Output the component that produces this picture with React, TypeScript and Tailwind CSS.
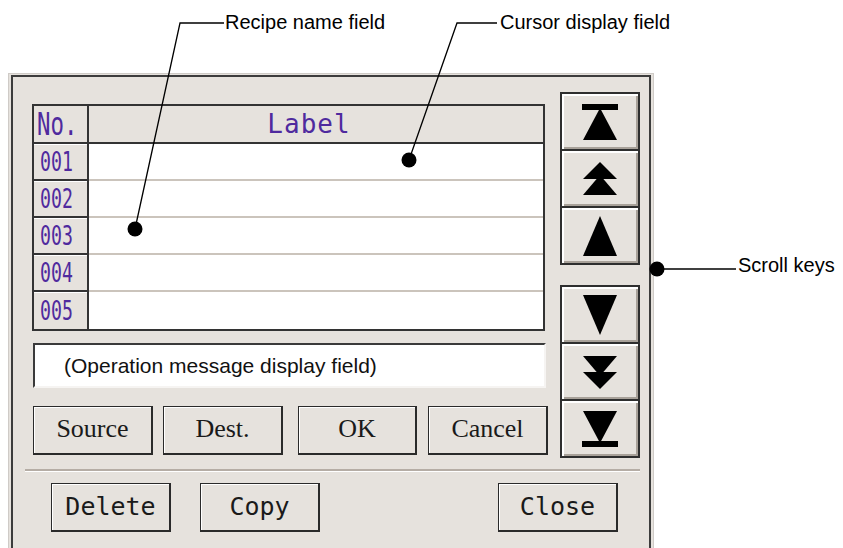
const PURPLE = "text-[#4f2a9e]";

function UpIcon({ kind }: { kind: "top" | "page" | "line" }) {
  return (
    <svg width="36" height="40" viewBox="0 0 36 40">
      {kind === "top" && (
        <>
          <rect x="0" y="2" width="36" height="6" fill="#000" />
          <polygon points="18,6 35,38 1,38" fill="#000" />
        </>
      )}
      {kind === "page" && (
        <>
          <polygon points="18,3 35,20 1,20" fill="#000" />
          <polygon points="18,16 35,36 1,36" fill="#000" />
        </>
      )}
      {kind === "line" && <polygon points="18,0 35,40 1,40" fill="#000" />}
    </svg>
  );
}

function ScrollKey({ kind, down }: { kind: "top" | "page" | "line"; down?: boolean }) {
  return (
    <div className="h-[59px] -mt-[2px] first:mt-0 border-2 border-[#2e2e2e] bg-[#e6e2dd] shadow-[inset_2px_2px_0_#ffffff,inset_-2px_-2px_0_#a8a199] flex items-center justify-center">
      <div className={down ? "rotate-180" : ""}>
        <UpIcon kind={kind} />
      </div>
    </div>
  );
}

function SerifButton({ label, className }: { label: string; className: string }) {
  return (
    <div
      className={`h-[49px] border border-[#2a2a2a] border-r-2 border-b-2 bg-[#e6e2dd] shadow-[inset_1px_1px_0_#ffffff] flex items-center justify-center pb-[3px] text-[26px] text-[#1a1a1a] ${className}`}
      style={{ fontFamily: '"Liberation Serif", serif' }}
    >
      {label}
    </div>
  );
}

function MonoButton({ label, className }: { label: string; className: string }) {
  return (
    <div
      className={`w-[120px] h-[49px] border border-[#2a2a2a] border-r-2 border-b-2 bg-[#e6e2dd] shadow-[inset_1px_1px_0_#ffffff] flex items-center justify-center text-[25px] text-[#1a1a1a] ${className}`}
      style={{ fontFamily: '"DejaVu Sans Mono", monospace' }}
    >
      {label}
    </div>
  );
}

const rows = ["001", "002", "003", "004", "005"];

export default function App() {
  return (
    <div
      className="relative w-[843px] h-[548px] overflow-hidden bg-white"
      style={{ fontFamily: '"Liberation Sans", Arial, sans-serif' }}
    >
      {/* annotation band */}
      <div className="h-[73px]" />

      {/* Dialog */}
      <div className="ml-[8px] w-[646px] h-[500px] border border-[#cfcbc7] px-[2px] py-px bg-[#e6e2dd]">
        <div className="h-full border-2 border-[#3c3c3c] pt-[15px]">
          <div className="flex">
            {/* Left column */}
            <div className="ml-[19px] w-[516px] pt-[12px]">
              {/* Table */}
              <div className="w-[513px] border-2 border-[#333]">
                <div className="flex h-[38px] border-b-2 border-[#333] bg-[#e6e2dd]">
                  <div className="w-[55px] border-r-2 border-[#333] flex items-center pl-[3px]">
                    <span
                      className={`inline-block origin-left scale-x-[0.7] text-[32px] leading-none ${PURPLE}`}
                      style={{ fontFamily: '"DejaVu Sans Mono", monospace' }}
                    >
                      No.
                    </span>
                  </div>
                  <div
                    className={`flex-1 flex items-center justify-center pr-[14px] text-[26px] tracking-[1px] ${PURPLE}`}
                    style={{ fontFamily: '"DejaVu Sans Mono", monospace' }}
                  >
                    Label
                  </div>
                </div>
                {rows.map((n, i) => {
                  const last = i === rows.length - 1;
                  return (
                    <div key={n} className="flex h-[37px]">
                      <div
                        className={`w-[55px] bg-[#e6e2dd] border-r-2 border-[#333] shadow-[inset_0_1px_0_#ffffff] flex items-center pl-[6px] ${
                          last ? "" : "border-b-2"
                        }`}
                      >
                        <span
                          className={`inline-block origin-left scale-x-[0.7] text-[26px] leading-none ${PURPLE}`}
                          style={{ fontFamily: '"DejaVu Sans Mono", monospace' }}
                        >
                          {n}
                        </span>
                      </div>
                      <div className={`flex-1 bg-white ${last ? "" : "border-b-2 border-[#cbc4bc]"}`} />
                    </div>
                  );
                })}
              </div>

              {/* Message field */}
              <div className="ml-px mt-[12px] w-[513px] h-[45px] bg-white border-2 border-t-[#3a3a3a] border-l-[#3a3a3a] border-r-[#f6f4f2] border-b-[#f6f4f2] flex items-center pl-[29px] text-[21px] text-[#111]">
                (Operation message display field)
              </div>

              {/* Action buttons */}
              <div className="mt-[18px] flex">
                <SerifButton label="Source" className="ml-px w-[120px]" />
                <SerifButton label="Dest." className="ml-[10px] w-[120px]" />
                <SerifButton label="OK" className="ml-[15px] w-[119px]" />
                <SerifButton label="Cancel" className="ml-[11px] w-[120px]" />
              </div>
            </div>

            {/* Scroll keys */}
            <div className="ml-[12px] w-[80px]">
              <div className="flex flex-col">
                <ScrollKey kind="top" />
                <ScrollKey kind="page" />
                <ScrollKey kind="line" />
              </div>
              <div className="mt-[20px] flex flex-col">
                <ScrollKey kind="line" down />
                <ScrollKey kind="page" down />
                <ScrollKey kind="top" down />
              </div>
            </div>
          </div>

          {/* Separator */}
          <div className="mt-[11px] ml-[12px] mr-[9px] border-t-2 border-[#b5ada5] border-b border-b-white" />

          {/* Bottom buttons */}
          <div className="mt-[11px] flex mr-[31px]">
            <MonoButton label="Delete" className="ml-[38px]" />
            <MonoButton label="Copy" className="ml-[29px]" />
            <MonoButton label="Close" className="ml-auto" />
          </div>
        </div>
      </div>

      {/* Callouts */}
      <svg className="absolute left-0 top-0 pointer-events-none" width="843" height="548">
        <polyline points="224,23 180,23 135,229" fill="none" stroke="#000" strokeWidth="1.3" />
        <polyline points="497,23 457,23 409,160" fill="none" stroke="#000" strokeWidth="1.3" />
        <line x1="657" y1="269" x2="736" y2="269" stroke="#000" strokeWidth="1.3" />
        <circle cx="135" cy="229" r="7.5" fill="#000" />
        <circle cx="409" cy="160" r="7.5" fill="#000" />
        <circle cx="657" cy="269" r="7.5" fill="#000" />
      </svg>
      <div className="absolute left-[225px] top-[11px] text-[20px] leading-[23px] text-black">Recipe name field</div>
      <div className="absolute left-[500px] top-[11px] text-[20px] leading-[23px] text-black">Cursor display field</div>
      <div className="absolute left-[738px] top-[254px] text-[20px] leading-[23px] text-black">Scroll keys</div>
    </div>
  );
}
